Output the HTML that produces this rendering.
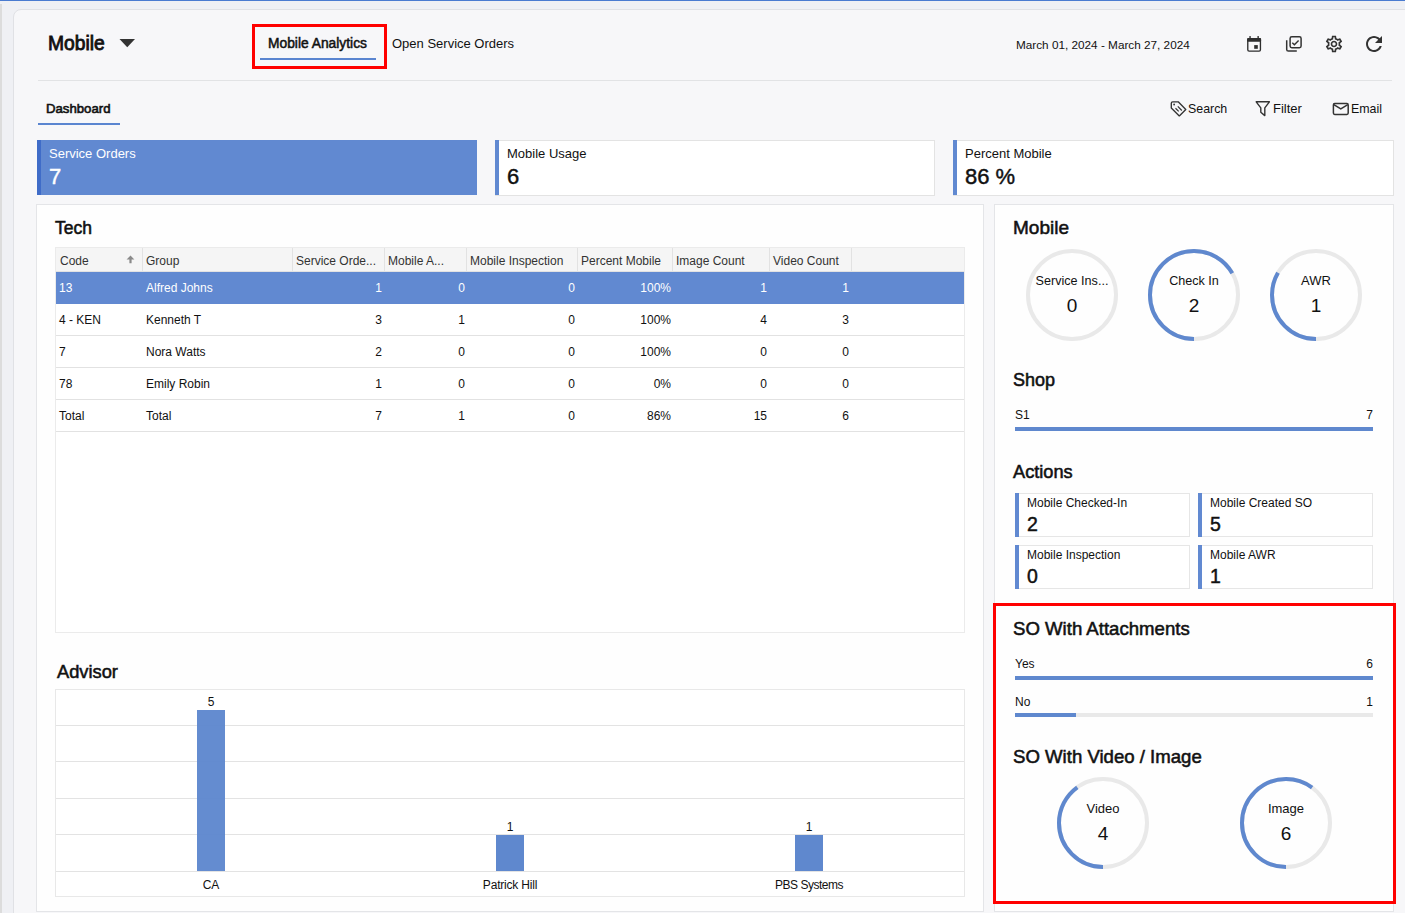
<!DOCTYPE html>
<html><head><meta charset="utf-8">
<style>
*{box-sizing:border-box;margin:0;padding:0}
html,body{width:1405px;height:913px;overflow:hidden}
body{background:#eff0f4;font-family:"Liberation Sans",sans-serif;color:#1b1b1b;position:relative}
.a{position:absolute}
.t{position:absolute;line-height:1;white-space:nowrap}
.b{font-weight:bold}
.f12{font-size:12px}.f13{font-size:13px}.f17{font-size:17px}.f18{font-size:18px}
.ic{position:absolute;fill:#333}
.panel{position:absolute;background:#fefefe;border:1px solid #e4e5e8}
.kpi{position:absolute;top:140px;height:56px;width:440px;background:#fff;border:1px solid #e3e3e3;border-left:none}
.kpi::before{content:"";position:absolute;left:0;top:-1px;height:55px;width:4px;background:#6189d1}
.cell{position:absolute;font-size:12px;line-height:1;white-space:nowrap}
.r{text-align:right}
.hl{position:absolute;height:1px;background:#e2e2e2}
.vl{position:absolute;width:1px;background:#e2e2e2}
.act{position:absolute;width:175px;height:44px;background:#fff;border:1px solid #e6e6e6;border-left:none}
.act::before{content:"";position:absolute;left:0;top:-1px;bottom:-1px;width:4px;background:#6189d1}
.sb{-webkit-text-stroke:0.45px currentColor}
.tt{position:absolute;line-height:1;white-space:nowrap;font-size:18px;-webkit-text-stroke:0.55px currentColor;color:#111}
</style></head><body>
<!-- top strip -->
<div class="a" style="left:0;top:0;width:1405px;height:1px;background:#4a7bd0"></div>
<div class="a" style="left:0;top:4px;width:2px;height:909px;background:#dcdcdc"></div>
<!-- outer card -->
<div class="a" style="left:13px;top:9px;width:1420px;height:920px;background:#f7f7f9;border:1px solid #e0e1e5;border-top-left-radius:8px"></div>

<!-- header -->
<div class="tt" style="left:48px;top:34px;font-size:19.3px;-webkit-text-stroke:0.8px #111">Mobile</div>
<svg class="ic" style="left:119px;top:38px" width="17" height="10" viewBox="0 0 17 10"><path d="M0.5 1H16L8.25 9.2z" fill="#333"/></svg>

<div class="a" style="left:252px;top:24px;width:135px;height:45px;border:3px solid #ff0000"></div>
<div class="tt" style="left:268px;top:37px;font-size:13.8px;-webkit-text-stroke:0.5px #111">Mobile Analytics</div>
<div class="a" style="left:260px;top:58px;width:116px;height:2px;background:#5a85d0"></div>
<div class="t f13" style="left:392px;top:37px;color:#111">Open Service Orders</div>

<div class="t" style="left:1016px;top:39px;font-size:11.75px;color:#111">March 01, 2024 - March 27, 2024</div>

<!-- calendar -->
<svg class="a" style="left:1240px;top:30px" width="26" height="26" viewBox="0 0 26 26"><rect x="7.78" y="8.7" width="12.65" height="12.35" rx="1.3" fill="none" stroke="#2e2e2e" stroke-width="1.35"/><rect x="7.1" y="8" width="14" height="3.7" rx="1" fill="#2e2e2e"/><rect x="9.35" y="6" width="1.4" height="2.6" rx="0.5" fill="#2e2e2e"/><rect x="17.45" y="6" width="1.4" height="2.6" rx="0.5" fill="#2e2e2e"/><rect x="14.2" y="15.1" width="3.6" height="3.7" fill="#2e2e2e"/></svg>
<!-- library check -->
<svg class="a" style="left:1280px;top:30px" width="26" height="26" viewBox="0 0 26 26"><rect x="10.1" y="6.7" width="11" height="11.1" rx="1.7" fill="none" stroke="#333" stroke-width="1.5"/><path d="M6.7 10.3V19.4Q6.7 21.1 8.4 21.1H16.8" fill="none" stroke="#333" stroke-width="1.5"/><path d="M12.3 12.7L14.4 14.8 18.6 10.4" fill="none" stroke="#333" stroke-width="1.4"/></svg>
<!-- settings -->
<svg class="ic" style="left:1324px;top:34px" width="20" height="20" viewBox="0 0 24 24"><path d="M19.43 12.98c.04-.32.07-.64.07-.98 0-.34-.03-.66-.07-.98l2.11-1.65c.19-.15.24-.42.12-.64l-2-3.46c-.09-.16-.26-.25-.44-.25-.06 0-.12.01-.17.03l-2.49 1c-.52-.4-1.08-.73-1.690-.98l-.38-2.65C14.46 2.18 14.250 2 14 2h-4c-.25 0-.46.18-.49.42l-.38 2.65c-.61.25-1.17.59-1.69.98l-2.49-1c-.06-.02-.12-.03-.18-.03-.17 0-.34.09-.43.25l-2 3.46c-.13.22-.07.49.12.64l2.11 1.65c-.04.32-.07.65-.07.98 0 .33.03.66.07.98l-2.11 1.65c-.19.15-.24.42-.12.64l2 3.46c.09.16.26.25.44.25.06 0 .12-.01.17-.03l2.49-1c.52.4 1.08.73 1.69.98l.38 2.65c.03.24.24.42.49.42h4c.25 0 .46-.18.49-.42l.38-2.65c.61-.25 1.17-.59 1.69-.98l2.49 1c.06.02.12.03.18.03.17 0 .34-.09.43-.25l2-3.46c.12-.22.07-.49-.12-.64l-2.11-1.65zm-1.98-1.71c.04.31.05.52.05.73 0 .21-.02.43-.05.73l-.14 1.13.89.7 1.08.84-.7 1.21-1.27-.51-1.04-.42-.9.68c-.43.32-.84.56-1.25.73l-1.06.43-.16 1.13-.2 1.35h-1.4l-.19-1.350-.16-1.13-1.06-.43c-.43-.18-.83-.41-1.23-.71l-.91-.7-1.06.43-1.27.51-.7-1.21 1.08-.84.89-.7-.14-1.13c-.03-.31-.05-.54-.05-.74s.02-.43.05-.73l.14-1.13-.89-.7-1.08-.84.7-1.21 1.27.51 1.04.42.9-.68c.43-.32.84-.56 1.25-.73l1.06-.43.16-1.13.2-1.35h1.39l.19 1.35.16 1.13 1.06.43c.43.18.83.41 1.23.71l.91.7 1.06-.43 1.27-.51.7 1.21-1.07.85-.89.7.14 1.13zM12 8c-2.21 0-4 1.790-4 4s1.79 4 4 4 4-1.79 4-4-1.79-4-4-4zm0 6c-1.1 0-2-.9-2-2s.9-2 2-2 2 .9 2 2-.9 2-2 2z"/></svg>
<!-- refresh -->
<svg class="ic" style="left:1362px;top:32px" width="24" height="24" viewBox="0 0 24 24"><path d="M17.65 6.35C16.2 4.9 14.21 4 12 4c-4.42 0-7.99 3.58-7.99 8s3.57 8 7.99 8c3.73 0 6.84-2.55 7.73-6h-2.08c-.82 2.33-3.04 4-5.65 4-3.31 0-6-2.690-6-6s2.69-6 6-6c1.66 0 3.14.69 4.22 1.78L13 11h7V4l-2.35 2.35z"/></svg>

<div class="a" style="left:38px;top:80px;width:1354px;height:1px;background:#e2e3e5"></div>

<div class="tt" style="left:46px;top:102px;font-size:13.2px;-webkit-text-stroke:0.6px #111">Dashboard</div>
<div class="a" style="left:38px;top:123px;width:82px;height:2px;background:#5a85d0"></div>

<!-- Search / Filter / Email -->
<svg class="a" style="left:1165px;top:96px" width="27" height="26" viewBox="0 0 27 26"><path d="M6.3 7.2Q6.3 5.8 7.7 5.8H13.2L20.8 13.4 14.3 19.9 6.3 11.9z" fill="none" stroke="#333" stroke-width="1.35" stroke-linejoin="round"/><circle cx="9.1" cy="8.5" r="0.9" fill="#333"/><path d="M12.8 10.3L16.8 14.5M10.5 12.3L13.7 15.4" stroke="#333" stroke-width="1.2"/></svg>
<div class="t" style="left:1188px;top:103px;font-size:12.4px;color:#111">Search</div>
<svg class="a" style="left:1250px;top:96px" width="26" height="26" viewBox="0 0 26 26"><path d="M6.2 5.8H19.4L14.8 11.9V19.6L10.8 16.3V11.9z" fill="none" stroke="#333" stroke-width="1.4" stroke-linejoin="round"/></svg>
<div class="t f13" style="left:1273px;top:102px;color:#111">Filter</div>
<svg class="a" style="left:1332px;top:101px" width="18" height="16" viewBox="0 0 18 16"><rect x="1.4" y="2.6" width="14.8" height="10.8" rx="1.3" fill="none" stroke="#333" stroke-width="1.5"/><path d="M1.8 3.6L8.8 7.9 15.8 3.6" fill="none" stroke="#333" stroke-width="1.5"/></svg>
<div class="t" style="left:1351px;top:103px;font-size:12.4px;color:#111">Email</div>

<!-- KPI cards -->
<div class="a" style="left:37px;top:140px;width:440px;height:55px;background:#6189d1"><div class="a" style="left:0;top:0;width:4px;height:55px;background:#3f6cc8"></div></div>
<div class="t f13" style="left:49px;top:147px;color:#fff">Service Orders</div>
<div class="t sb" style="left:49px;top:166px;font-size:22px;color:#fff">7</div>

<div class="kpi" style="left:495px"></div>
<div class="t f13" style="left:507px;top:147px;color:#111">Mobile Usage</div>
<div class="t sb" style="left:507px;top:166px;font-size:22px;color:#111">6</div>

<div class="kpi" style="left:953px;width:441px"></div>
<div class="t f13" style="left:965px;top:147px;color:#111">Percent Mobile</div>
<div class="t sb" style="left:965px;top:166px;font-size:22px;color:#111">86 %</div>

<!-- left panel -->
<div class="panel" style="left:36px;top:204px;width:948px;height:708px"></div>
<div class="tt" style="left:55px;top:220px;font-size:17.5px">Tech</div>

<!-- table -->
<div class="a" style="left:55px;top:247px;width:910px;height:386px;border:1px solid #ebebeb;background:#fff"></div>
<div class="a" style="left:56px;top:248px;width:908px;height:24px;background:#f5f5f5"></div>
<div class="hl" style="left:56px;top:271px;width:908px"></div>
<div class="vl" style="left:142px;top:248px;height:23px"></div>
<div class="vl" style="left:292px;top:248px;height:23px"></div>
<div class="vl" style="left:384px;top:248px;height:23px"></div>
<div class="vl" style="left:466px;top:248px;height:23px"></div>
<div class="vl" style="left:577px;top:248px;height:23px"></div>
<div class="vl" style="left:672px;top:248px;height:23px"></div>
<div class="vl" style="left:769px;top:248px;height:23px"></div>
<div class="vl" style="left:851px;top:248px;height:23px"></div>
<div class="cell" style="left:60px;top:255px;color:#333">Code</div>
<svg class="a" style="left:126px;top:255px" width="9" height="9" viewBox="0 0 9 9"><path d="M4.5 0.6L8.4 4.6H5.6V8.2H3.4V4.6H0.6z" fill="#8a8a8a"/></svg>
<div class="cell" style="left:146px;top:255px;color:#333">Group</div>
<div class="cell" style="left:296px;top:255px;color:#333">Service Orde...</div>
<div class="cell" style="left:388px;top:255px;color:#333">Mobile A...</div>
<div class="cell" style="left:470px;top:255px;color:#333">Mobile Inspection</div>
<div class="cell" style="left:581px;top:255px;color:#333">Percent Mobile</div>
<div class="cell" style="left:676px;top:255px;color:#333">Image Count</div>
<div class="cell" style="left:773px;top:255px;color:#333">Video Count</div>

<div class="a" style="left:56px;top:272px;width:908px;height:32px;background:#6189d1"></div>
<div class="hl" style="left:56px;top:335px;width:908px"></div>
<div class="hl" style="left:56px;top:367px;width:908px"></div>
<div class="hl" style="left:56px;top:399px;width:908px"></div>
<div class="hl" style="left:56px;top:431px;width:908px"></div>

<div class="cell" style="left:59px;top:282px;color:#fff">13</div>
<div class="cell" style="left:146px;top:282px;color:#fff">Alfred Johns</div>
<div class="cell r" style="left:282px;top:282px;width:100px;color:#fff">1</div>
<div class="cell r" style="left:365px;top:282px;width:100px;color:#fff">0</div>
<div class="cell r" style="left:475px;top:282px;width:100px;color:#fff">0</div>
<div class="cell r" style="left:571px;top:282px;width:100px;color:#fff">100%</div>
<div class="cell r" style="left:667px;top:282px;width:100px;color:#fff">1</div>
<div class="cell r" style="left:749px;top:282px;width:100px;color:#fff">1</div>
<div class="cell" style="left:59px;top:314px;color:#111">4 - KEN</div>
<div class="cell" style="left:146px;top:314px;color:#111">Kenneth T</div>
<div class="cell r" style="left:282px;top:314px;width:100px;color:#111">3</div>
<div class="cell r" style="left:365px;top:314px;width:100px;color:#111">1</div>
<div class="cell r" style="left:475px;top:314px;width:100px;color:#111">0</div>
<div class="cell r" style="left:571px;top:314px;width:100px;color:#111">100%</div>
<div class="cell r" style="left:667px;top:314px;width:100px;color:#111">4</div>
<div class="cell r" style="left:749px;top:314px;width:100px;color:#111">3</div>
<div class="cell" style="left:59px;top:346px;color:#111">7</div>
<div class="cell" style="left:146px;top:346px;color:#111">Nora Watts</div>
<div class="cell r" style="left:282px;top:346px;width:100px;color:#111">2</div>
<div class="cell r" style="left:365px;top:346px;width:100px;color:#111">0</div>
<div class="cell r" style="left:475px;top:346px;width:100px;color:#111">0</div>
<div class="cell r" style="left:571px;top:346px;width:100px;color:#111">100%</div>
<div class="cell r" style="left:667px;top:346px;width:100px;color:#111">0</div>
<div class="cell r" style="left:749px;top:346px;width:100px;color:#111">0</div>
<div class="cell" style="left:59px;top:378px;color:#111">78</div>
<div class="cell" style="left:146px;top:378px;color:#111">Emily Robin</div>
<div class="cell r" style="left:282px;top:378px;width:100px;color:#111">1</div>
<div class="cell r" style="left:365px;top:378px;width:100px;color:#111">0</div>
<div class="cell r" style="left:475px;top:378px;width:100px;color:#111">0</div>
<div class="cell r" style="left:571px;top:378px;width:100px;color:#111">0%</div>
<div class="cell r" style="left:667px;top:378px;width:100px;color:#111">0</div>
<div class="cell r" style="left:749px;top:378px;width:100px;color:#111">0</div>
<div class="cell" style="left:59px;top:410px;color:#111">Total</div>
<div class="cell" style="left:146px;top:410px;color:#111">Total</div>
<div class="cell r" style="left:282px;top:410px;width:100px;color:#111">7</div>
<div class="cell r" style="left:365px;top:410px;width:100px;color:#111">1</div>
<div class="cell r" style="left:475px;top:410px;width:100px;color:#111">0</div>
<div class="cell r" style="left:571px;top:410px;width:100px;color:#111">86%</div>
<div class="cell r" style="left:667px;top:410px;width:100px;color:#111">15</div>
<div class="cell r" style="left:749px;top:410px;width:100px;color:#111">6</div>

<div class="tt" style="left:57px;top:663px;font-size:18.3px">Advisor</div>

<!-- chart -->
<div class="a" style="left:55px;top:689px;width:910px;height:208px;border:1px solid #e8e8e8;background:#fff"></div>
<div class="hl" style="left:56px;top:725px;width:908px;background:#e3e3e3"></div>
<div class="hl" style="left:56px;top:761px;width:908px;background:#e3e3e3"></div>
<div class="hl" style="left:56px;top:798px;width:908px;background:#e3e3e3"></div>
<div class="hl" style="left:56px;top:834px;width:908px;background:#e3e3e3"></div>
<div class="hl" style="left:56px;top:871px;width:908px;background:#e3e3e3"></div>
<div class="a" style="left:197px;top:710px;width:28px;height:161px;background:#5f88ce;opacity:.97"></div>
<div class="a" style="left:496px;top:835px;width:28px;height:36px;background:#5f88ce"></div>
<div class="a" style="left:795px;top:835px;width:28px;height:36px;background:#5f88ce"></div>
<div class="cell" style="left:197px;top:696px;width:28px;text-align:center;color:#111">5</div>
<div class="cell" style="left:496px;top:821px;width:28px;text-align:center;color:#111">1</div>
<div class="cell" style="left:795px;top:821px;width:28px;text-align:center;color:#111">1</div>
<div class="cell" style="left:111px;top:879px;width:200px;text-align:center;color:#111">CA</div>
<div class="cell" style="left:410px;top:879px;width:200px;text-align:center;color:#111;letter-spacing:-0.2px">Patrick Hill</div>
<div class="cell" style="left:709px;top:879px;width:200px;text-align:center;color:#111;letter-spacing:-0.5px">PBS Systems</div>

<!-- right panel -->
<div class="panel" style="left:994px;top:204px;width:400px;height:708px"></div>
<div class="tt" style="left:1013px;top:218px;font-size:19px">Mobile</div>

<svg class="a" style="left:1022px;top:245px" width="100" height="100" viewBox="0 0 100 100"><circle cx="50" cy="50" r="44" fill="none" stroke="#e9e9e9" stroke-width="4"/></svg>
<svg class="a" style="left:1144px;top:245px" width="100" height="100" viewBox="0 0 100 100"><circle cx="50" cy="50" r="44" fill="none" stroke="#e9e9e9" stroke-width="4"/><circle cx="50" cy="50" r="44" fill="none" stroke="#5f88ce" stroke-width="4" stroke-dasharray="184.3 400" transform="rotate(90 50 50)"/></svg>
<svg class="a" style="left:1266px;top:245px" width="100" height="100" viewBox="0 0 100 100"><circle cx="50" cy="50" r="44" fill="none" stroke="#e9e9e9" stroke-width="4"/><circle cx="50" cy="50" r="44" fill="none" stroke="#5f88ce" stroke-width="4" stroke-dasharray="92.2 400" transform="rotate(90 50 50)"/></svg>
<div class="t" style="left:1022px;top:275px;width:100px;text-align:center;font-size:12.6px;color:#111">Service Ins...</div>
<div class="t" style="left:1022px;top:296px;width:100px;text-align:center;font-size:19px;color:#111">0</div>
<div class="t" style="left:1144px;top:275px;width:100px;text-align:center;font-size:12.6px;color:#111">Check In</div>
<div class="t" style="left:1144px;top:296px;width:100px;text-align:center;font-size:19px;color:#111">2</div>
<div class="t f13" style="left:1266px;top:274px;width:100px;text-align:center;color:#111">AWR</div>
<div class="t" style="left:1266px;top:296px;width:100px;text-align:center;font-size:19px;color:#111">1</div>

<div class="tt" style="left:1013px;top:371px">Shop</div>
<div class="cell" style="left:1015px;top:409px;color:#111">S1</div>
<div class="cell r" style="left:1273px;top:409px;width:100px;color:#111">7</div>
<div class="a" style="left:1015px;top:427px;width:358px;height:4px;background:#5f88ce"></div>

<div class="tt" style="left:1013px;top:463px;font-size:18.2px">Actions</div>
<div class="act" style="left:1015px;top:493px"></div>
<div class="act" style="left:1198px;top:493px"></div>
<div class="act" style="left:1015px;top:545px"></div>
<div class="act" style="left:1198px;top:545px"></div>
<div class="cell" style="left:1027px;top:497px;color:#111">Mobile Checked-In</div>
<div class="t sb" style="left:1027px;top:515px;font-size:19.5px;color:#111">2</div>
<div class="cell" style="left:1210px;top:497px;color:#111">Mobile Created SO</div>
<div class="t sb" style="left:1210px;top:515px;font-size:19.5px;color:#111">5</div>
<div class="cell" style="left:1027px;top:549px;color:#111">Mobile Inspection</div>
<div class="t sb" style="left:1027px;top:567px;font-size:19.5px;color:#111">0</div>
<div class="cell" style="left:1210px;top:549px;color:#111">Mobile AWR</div>
<div class="t sb" style="left:1210px;top:567px;font-size:19.5px;color:#111">1</div>

<div class="a" style="left:993px;top:603px;width:403px;height:301px;border:3px solid #ff0000"></div>
<div class="tt" style="left:1013px;top:620px;font-size:18.6px">SO With Attachments</div>
<div class="cell" style="left:1015px;top:658px;color:#111">Yes</div>
<div class="cell r" style="left:1273px;top:658px;width:100px;color:#111">6</div>
<div class="a" style="left:1015px;top:676px;width:358px;height:4px;background:#5f88ce"></div>
<div class="cell" style="left:1015px;top:696px;color:#111">No</div>
<div class="cell r" style="left:1273px;top:696px;width:100px;color:#111">1</div>
<div class="a" style="left:1015px;top:713px;width:358px;height:4px;background:#e9e9e9"></div>
<div class="a" style="left:1015px;top:713px;width:61px;height:4px;background:#5f88ce"></div>

<div class="tt" style="left:1013px;top:748px;font-size:18.6px">SO With Video / Image</div>
<svg class="a" style="left:1053px;top:773px" width="100" height="100" viewBox="0 0 100 100"><circle cx="50" cy="50" r="44" fill="none" stroke="#e9e9e9" stroke-width="4"/><circle cx="50" cy="50" r="44" fill="none" stroke="#5f88ce" stroke-width="4" stroke-dasharray="110.6 400" transform="rotate(90 50 50)"/></svg>
<svg class="a" style="left:1236px;top:773px" width="100" height="100" viewBox="0 0 100 100"><circle cx="50" cy="50" r="44" fill="none" stroke="#e9e9e9" stroke-width="4"/><circle cx="50" cy="50" r="44" fill="none" stroke="#5f88ce" stroke-width="4" stroke-dasharray="165.9 400" transform="rotate(90 50 50)"/></svg>
<div class="t f13" style="left:1053px;top:802px;width:100px;text-align:center;color:#111">Video</div>
<div class="t" style="left:1053px;top:824px;width:100px;text-align:center;font-size:19px;color:#111">4</div>
<div class="t f13" style="left:1236px;top:802px;width:100px;text-align:center;color:#111">Image</div>
<div class="t" style="left:1236px;top:824px;width:100px;text-align:center;font-size:19px;color:#111">6</div>
</body></html>
